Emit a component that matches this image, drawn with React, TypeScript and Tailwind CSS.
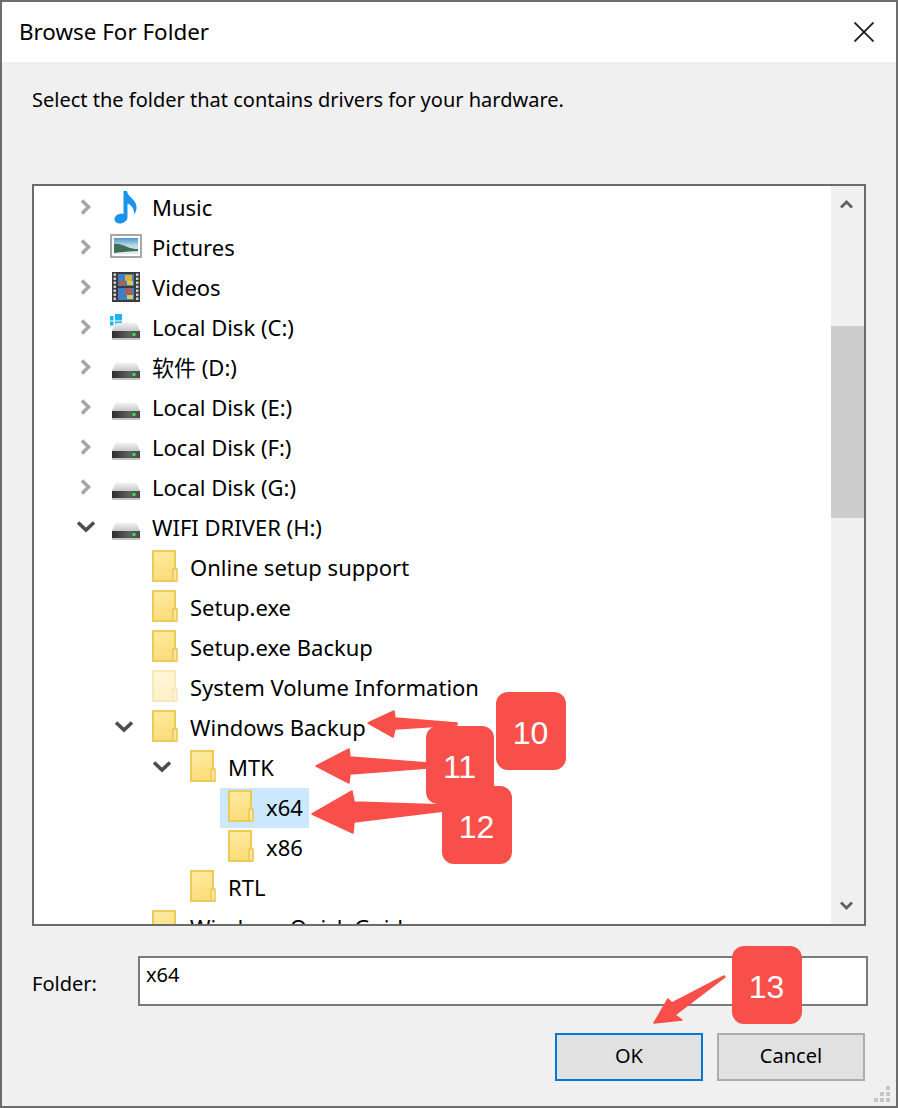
import React from "react";

const Chevron = ({ open }: { open?: boolean }) => (
  <svg width="16" height="16" viewBox="0 0 16 16" className="shrink-0 overflow-visible">
    {open ? (
      <path d="M0 3.5 L8 11 L16 3.5" fill="none" stroke="#4d4d4d" strokeWidth="3.6" />
    ) : (
      <path d="M4 1.5 L10.5 8 L4 14.5" fill="none" stroke="#a6a6a6" strokeWidth="3.6" />
    )}
  </svg>
);

const Folder = ({ faded }: { faded?: boolean }) => (
  <svg width="26" height="32" viewBox="0 0 26 32" className={"-mt-[4px] " + (faded ? "opacity-40" : "")}>
    <defs>
      <linearGradient id="fg" x1="0" y1="0" x2="0.3" y2="1">
        <stop offset="0" stopColor="#fdeca6" />
        <stop offset="1" stopColor="#fddc7a" />
      </linearGradient>
    </defs>
    <rect x="1" y="1" width="22" height="30" fill="url(#fg)" stroke="#ebca55" strokeWidth="2" />
    <rect x="21" y="19" width="4" height="12" fill="#fde7a0" stroke="#ebca55" strokeWidth="1.6" />
  </svg>
);

const Drive = () => (
  <svg width="28" height="17" viewBox="0 0 28 17" className="block">
    <defs>
      <linearGradient id="dg" x1="0" y1="0" x2="0" y2="1">
        <stop offset="0" stopColor="#f0f1f3" />
        <stop offset="1" stopColor="#c5c8cc" />
      </linearGradient>
      <linearGradient id="band" x1="0" y1="0" x2="1" y2="0">
        <stop offset="0" stopColor="#2f2f2f" />
        <stop offset="0.6" stopColor="#5f5f5f" />
        <stop offset="1" stopColor="#4a4a4a" />
      </linearGradient>
    </defs>
    <path d="M5 0 H23 C25 0 27 5 28 8 H0 C1 5 3 0 5 0 Z" fill="url(#dg)" />
    <rect x="0" y="8" width="28" height="7" fill="url(#band)" />
    <rect x="0" y="15" width="28" height="2" fill="#c2c4c6" />
    <rect x="20.5" y="10" width="3" height="3" fill="#3ee23e" />
  </svg>
);

const DriveIcon = () => (
  <span className="block mt-[7px] -ml-[2px]">
    <Drive />
  </span>
);

const SysDrive = () => (
  <span className="relative block w-[28px] h-[24px] -ml-[2px]">
    <svg width="12" height="13" viewBox="0 0 12 13" className="absolute left-[-2px] top-[-2px]">
      <rect x="0" y="2" width="3.5" height="4.5" fill="#1fb4f0" />
      <rect x="5" y="0" width="7" height="6.5" fill="#1fb4f0" />
      <rect x="0" y="7.5" width="3.5" height="4" fill="#1fb4f0" />
      <rect x="5" y="7.5" width="7" height="5.5" fill="#1fb4f0" />
    </svg>
    <span className="absolute left-0 bottom-0 block h-[17px]">
      <Drive />
    </span>
  </span>
);

const Music = () => (
  <svg width="24" height="34" viewBox="0 0 24 34" className="-ml-[2px] -mt-[2px]">
    <path
      d="M9.5 1 H13 C13.5 7 22 9 22.5 17 C22.7 20 21.5 23 20 24.5 C20.6 19 17.5 15 13.5 13.5 V27 C13.5 31 9.5 33.5 5.5 33.5 C2.5 33.5 0.5 31.8 0.5 29.3 C0.5 25.5 5 23.2 9.5 24 Z"
      fill="#1a93ee"
    />
  </svg>
);

const Pictures = () => (
  <svg width="32" height="24" viewBox="0 0 32 24" className="-ml-[2px] -mt-[4px] shrink-0">
    <defs>
      <linearGradient id="sky" x1="0" y1="0" x2="0" y2="1">
        <stop offset="0" stopColor="#4f93cf" />
        <stop offset="0.45" stopColor="#b7d6e6" />
        <stop offset="1" stopColor="#e5eef0" />
      </linearGradient>
    </defs>
    <rect x="1" y="1" width="30" height="22" fill="#fff" stroke="#a8a8a8" strokeWidth="2" />
    <rect x="4" y="4" width="24" height="16" fill="url(#sky)" />
    <path d="M4 10 C10 9 14 12 20 14 C24 15 26 15 28 15 V17 C20 17 12 18 4 19 Z" fill="#3f6f55" />
  </svg>
);

const Videos = () => {
  const holes = [1, 5, 9, 13, 17, 21, 25];
  return (
    <svg width="28" height="30" viewBox="0 0 28 30" className="-ml-[2px] -mt-[2px]">
      <rect width="28" height="30" fill="#3b3b3b" />
      {holes.map((y) => (
        <g key={y}>
          <rect x="1.5" y={y + 0.5} width="2.5" height="2.5" fill="#cfcfcf" />
          <rect x="24" y={y + 0.5} width="2.5" height="2.5" fill="#cfcfcf" />
        </g>
      ))}
      <rect x="6" y="2" width="16" height="12" fill="#3f7fc6" />
      <rect x="6" y="16" width="16" height="12" fill="#3f7fc6" />
      <rect x="13" y="3" width="7" height="6" fill="#d9b23a" />
      <rect x="7" y="9" width="6" height="4" fill="#c9553a" />
      <rect x="15" y="9" width="6" height="4" fill="#e2c94a" />
      <rect x="13" y="17" width="7" height="5" fill="#c9553a" />
      <rect x="15" y="23" width="6" height="4" fill="#e2c94a" />
    </svg>
  );
};

type Row = {
  label: string;
  level: number;
  icon: React.ReactNode;
  chev?: "open" | "closed";
  selected?: boolean;
};

const rows: Row[] = [
  { label: "Music", level: 0, chev: "closed", icon: <Music /> },
  { label: "Pictures", level: 0, chev: "closed", icon: <Pictures /> },
  { label: "Videos", level: 0, chev: "closed", icon: <Videos /> },
  { label: "Local Disk (C:)", level: 0, chev: "closed", icon: <SysDrive /> },
  { label: "软件 (D:)", level: 0, chev: "closed", icon: <DriveIcon /> },
  { label: "Local Disk (E:)", level: 0, chev: "closed", icon: <DriveIcon /> },
  { label: "Local Disk (F:)", level: 0, chev: "closed", icon: <DriveIcon /> },
  { label: "Local Disk (G:)", level: 0, chev: "closed", icon: <DriveIcon /> },
  { label: "WIFI DRIVER (H:)", level: 0, chev: "open", icon: <DriveIcon /> },
  { label: "Online setup support", level: 1, icon: <Folder /> },
  { label: "Setup.exe", level: 1, icon: <Folder /> },
  { label: "Setup.exe Backup", level: 1, icon: <Folder /> },
  { label: "System Volume Information", level: 1, icon: <Folder faded /> },
  { label: "Windows Backup", level: 1, chev: "open", icon: <Folder /> },
  { label: "MTK", level: 2, chev: "open", icon: <Folder /> },
  { label: "x64", level: 3, selected: true, icon: <Folder /> },
  { label: "x86", level: 3, icon: <Folder /> },
  { label: "RTL", level: 2, icon: <Folder /> },
  { label: "Windows Quick Guide", level: 1, icon: <Folder /> },
];

const TreeRow = ({ row }: { row: Row }) => (
  <div className="h-[40px] flex items-center shrink-0" style={{ paddingLeft: 44 + row.level * 38 }}>
    <span className="w-[16px] flex justify-center shrink-0 -mt-[2px]">
      {row.chev && <Chevron open={row.chev === "open"} />}
    </span>
    <span className={"flex items-center h-[40px] ml-[12px] pl-[6px] pr-[6px] " + (row.selected ? "bg-[#cce8ff]" : "")}>
      <span className="w-[30px] h-[40px] flex items-center justify-center shrink-0">{row.icon}</span>
      <span className="ml-[10px] -mt-[2px] text-[22px] leading-[40px] text-black whitespace-nowrap">{row.label}</span>
    </span>
  </div>
);

const Badge = ({ n, className }: { n: string; className: string }) => (
  <div
    className={
      "absolute bg-[#f94f4a] rounded-[12px] flex items-center justify-center pt-[3px] pr-[1px] text-white text-[32px] font-['Liberation_Sans',sans-serif] " +
      className
    }
  >
    {n}
  </div>
);

export default function App() {
  return (
    <div className="relative w-[898px] h-[1108px] bg-[#f0f0f0] border-2 border-[#6d6d6d] overflow-hidden font-['Noto_Sans','Noto_Sans_CJK_SC',sans-serif] text-black">
      <div className="h-[60px] bg-white flex items-center justify-between pl-[17px] pr-[22px]">
        <span className="text-[22.4px]">Browse For Folder</span>
        <svg width="20" height="20" viewBox="0 0 20 20">
          <path d="M0.5 0.5 L19.5 19.5 M19.5 0.5 L0.5 19.5" stroke="#1a1a1a" strokeWidth="1.8" />
        </svg>
      </div>

      <div className="px-[30px] pt-[22px] h-[122px] text-[20px] leading-[32px]">
        Select the folder that contains drivers for your hardware.
      </div>

      <div className="mx-[30px] w-[834px] h-[742px] border-2 border-[#6b6b6b] bg-white flex overflow-hidden">
        <div className="flex-1 pt-[2px] flex flex-col overflow-hidden">
          {rows.map((r) => (
            <TreeRow key={r.label} row={r} />
          ))}
        </div>
        <div className="w-[33px] bg-[#f0f0f0] flex flex-col items-stretch">
          <div className="h-[36px] flex items-center justify-center pr-[2px]">
            <svg width="13" height="10" viewBox="0 0 13 10">
              <path d="M1 8.5 L6.5 3 L12 8.5" fill="none" stroke="#606060" strokeWidth="2.8" />
            </svg>
          </div>
          <div className="mt-[104px] h-[192px] bg-[#cdcdcd]" />
          <div className="mt-auto h-[36px] flex items-center justify-center pr-[2px]">
            <svg width="13" height="10" viewBox="0 0 13 10">
              <path d="M1 1.5 L6.5 7 L12 1.5" fill="none" stroke="#606060" strokeWidth="2.8" />
            </svg>
          </div>
        </div>
      </div>

      <div className="flex items-center mt-[30px] pl-[30px] h-[50px]">
        <span className="w-[106px] text-[20px] pt-[6px]">Folder:</span>
        <div className="w-[730px] h-[50px] bg-white border-2 border-[#7a7a7a] pl-[6px] text-[20px] leading-[34px]">
          x64
        </div>
      </div>

      <div className="flex justify-end gap-[14px] mt-[27px] pr-[31px]">
        <div className="w-[148px] h-[48px] pb-[2px] bg-[#e1e1e1] border-2 border-[#0078d7] flex items-center justify-center text-[20px]">
          OK
        </div>
        <div className="w-[148px] h-[48px] pb-[2px] bg-[#e1e1e1] border-2 border-[#adadad] flex items-center justify-center text-[20px]">
          Cancel
        </div>
      </div>

      <svg width="16" height="16" viewBox="0 0 16 16" className="absolute right-[6px] bottom-[4px]">
        {[
          [12, 0],
          [6, 6],
          [12, 6],
          [0, 12],
          [6, 12],
          [12, 12],
        ].map(([x, y]) => (
          <rect key={`${x}-${y}`} x={x} y={y} width="4" height="4" fill="#c6c6c6" />
        ))}
      </svg>

      <svg width="898" height="1108" viewBox="0 0 898 1108" className="absolute left-[-2px] top-[-2px] pointer-events-none">
        <g fill="#f94f4a" stroke="#f94f4a" strokeWidth="1.5" strokeLinejoin="round">
          <polygon points="368,723 394,711 395,718 457,723 457,725 395,729 393,737" />
          <polygon points="316,766 349,749 350,757 428,763 428,768 350,774 349,783" />
          <polygon points="312,814 352,791 354,802 444,805 444,811 354,822 353,833" />
          <polygon points="654,1023 668,999 672,1003 724,976 725,977 675,1015 682,1020" />
        </g>
      </svg>

      <Badge n="10" className="left-[494px] top-[690px] w-[70px] h-[78px]" />
      <Badge n="11" className="left-[424px] top-[724px] w-[68px] h-[78px]" />
      <Badge n="12" className="left-[440px] top-[784px] w-[70px] h-[78px]" />
      <Badge n="13" className="left-[730px] top-[944px] w-[70px] h-[78px]" />
    </div>
  );
}
